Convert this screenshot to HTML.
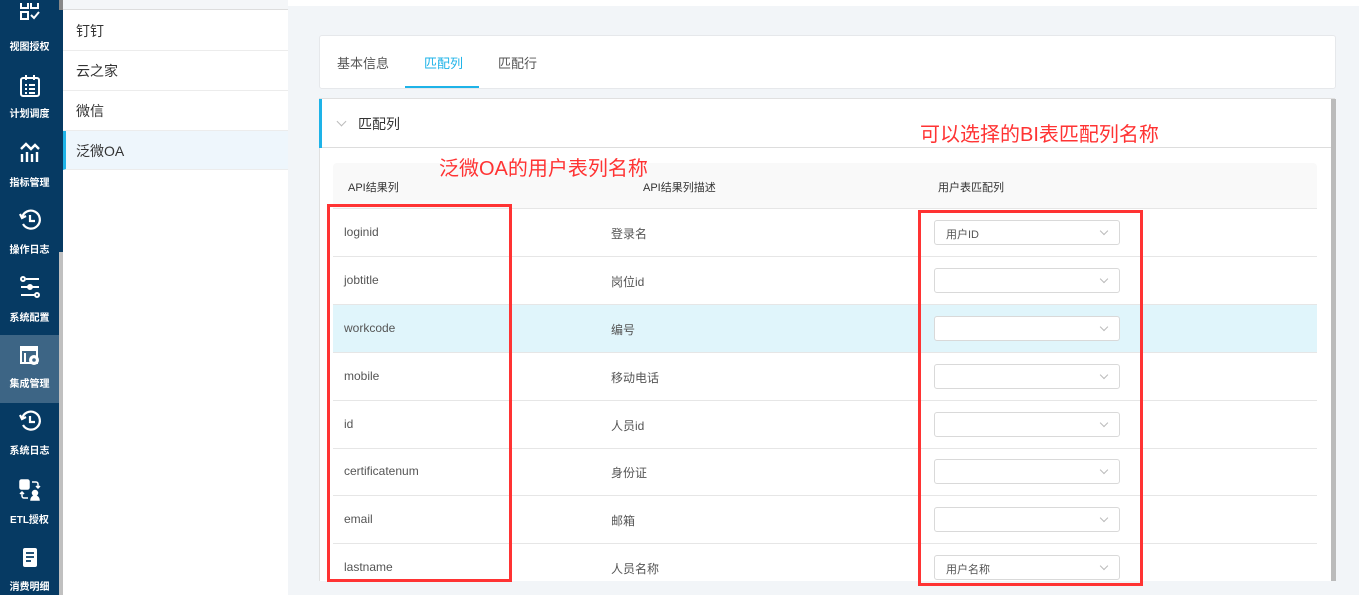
<!DOCTYPE html>
<html><head><meta charset="utf-8"><style>
*{margin:0;padding:0;box-sizing:border-box}
html,body{width:1359px;height:595px;overflow:hidden}
body{position:relative;background:#f2f5f8;font-family:"Liberation Sans","Noto Sans CJK SC",sans-serif;color:#444}
.a{position:absolute}
#sb{left:0;top:0;width:59px;height:595px;background:#063a63}
#sbs{left:59px;top:0;width:4px;height:595px;background:#c0c0c0}
.it{position:absolute;left:0;width:59px;height:68px;color:#fff;font-size:10px;text-align:center}
.it svg{position:absolute;left:18px;width:24px;height:24px}
.it span{position:absolute;left:0;width:59px;font-weight:bold}
#p2{left:63px;top:0;width:225px;height:595px;background:#fff}
.r2{position:absolute;left:0;width:225px;height:40px;border-bottom:1px solid #ececec;font-size:14px;color:#333;padding-left:13px;line-height:40px}
.tab{position:absolute;top:53px;font-size:13px;color:#555}
.row{position:absolute;left:333px;width:984px;height:48px;border-bottom:1px solid #e6e6e6;font-size:12px;color:#555}
.row .c1{position:absolute;left:11px;top:16px}
.row .c2{position:absolute;left:278px;top:16px}
.sel{position:absolute;left:601px;top:11px;width:186px;height:25px;border:1px solid #d9d9d9;border-radius:3px;background:#fff;font-size:11px;color:#555;padding:5px 0 0 11px}
.sel:after{content:"";position:absolute;right:12px;top:7px;width:5px;height:5px;border-right:1px solid #bbb;border-bottom:1px solid #bbb;transform:rotate(45deg)}
.red{position:absolute;border:3px solid #f33}
.rt{position:absolute;color:#f33;font-size:20px}
</style></head><body>
<div class="a" style="left:288px;top:0;width:1071px;height:6px;background:#fff"></div>
<div id="sb" class="a">
 <div class="it" style="top:0;height:66px"><svg style="top:3px" viewBox="0 0 24 24" fill="none" stroke="#fff" stroke-width="2"><rect x="3" y="-2" width="7" height="7"/><rect x="13" y="-2" width="7" height="7"/><rect x="3" y="9" width="7" height="7"/><path d="M13 12l3 3 5-6"/></svg><span style="top:38px">视图授权</span></div>
 <div class="it" style="top:68px;background:#063a63"><svg style="top:6px" viewBox="0 0 24 24" fill="none" stroke="#fff" stroke-width="2"><rect x="3" y="4" width="18" height="18" rx="2"/><path d="M8 1v5M16 1v5M7 11h2M11 11h6M7 15h2M11 15h6M7 19h2M11 19h6"/></svg><span style="top:37px">计划调度</span></div>
 <div class="it" style="top:136px"><svg style="top:4px" viewBox="0 0 24 24" fill="none" stroke="#fff" stroke-width="2.4"><path d="M3 9l5-5 5 5 4-4 4 4"/><path d="M4 14v8M9 12v10M14 14v8M19 12v10"/></svg><span style="top:38px">指标管理</span></div>
 <div class="it" style="top:202px"><svg style="top:6px" viewBox="0 0 24 24" fill="none" stroke="#fff" stroke-width="2.2"><path d="M4 10a9 9 0 1 1 1 6"/><path d="M2 6l2 4 4-2"/><path d="M12 7v6h5"/></svg><span style="top:39px">操作日志</span></div>
 <div class="it" style="top:270px"><svg style="top:5px" viewBox="0 0 24 24" fill="none" stroke="#fff" stroke-width="2"><path d="M8 4h13M3 12h18M3 20h14"/><circle cx="5" cy="4" r="2" fill="#063a63"/><circle cx="12" cy="12" r="2" fill="#fff"/><circle cx="19" cy="20" r="2" fill="#063a63"/></svg><span style="top:39px">系统配置</span></div>
 <div class="it" style="top:335px;background:#3d6585"><svg style="top:9px" viewBox="0 0 24 24" fill="#fff"><rect x="3" y="3" width="16" height="16" fill="none" stroke="#fff" stroke-width="2"/><rect x="3" y="3" width="16" height="4"/><rect x="6" y="9" width="2" height="9"/><circle cx="16" cy="16" r="5"/><circle cx="16" cy="16" r="1.8" fill="#3d6585"/></svg><span style="top:40px">集成管理</span></div>
 <div class="it" style="top:403px"><svg style="top:6px" viewBox="0 0 24 24" fill="none" stroke="#fff" stroke-width="2.2"><path d="M4 10a9 9 0 1 1 1 6"/><path d="M2 6l2 4 4-2"/><path d="M12 7v6h5"/></svg><span style="top:39px">系统日志</span></div>
 <div class="it" style="top:471px"><svg style="top:7px" viewBox="0 0 24 24" fill="#fff" stroke="#fff" stroke-width="1.5"><rect x="2" y="2" width="9" height="9" rx="1.5"/><path d="M14 4h4a2 2 0 0 1 2 2v3M18 8l2 2 2-2" fill="none"/><path d="M10 20H6a2 2 0 0 1-2-2v-3M2 16l2-2 2 2" fill="none"/><circle cx="17" cy="15" r="2.5"/><path d="M13 22a4 4 0 0 1 8 0z"/></svg><span style="top:40px">ETL授权</span></div>
 <div class="it" style="top:539px"><svg style="top:7px" viewBox="0 0 24 24"><rect x="5" y="2" width="14" height="19" rx="2" fill="#fff"/><path d="M8 7h8M8 11h8M8 15h5" stroke="#063a63" stroke-width="1.8"/></svg><span style="top:39px">消费明细</span></div>
</div>
<div id="sbs" class="a"><div class="a" style="left:0;top:0;width:4px;height:10px;background:#888"></div><div class="a" style="left:0;top:10px;width:4px;height:242px;background:#063a63"></div></div>
<div id="p2" class="a">
 <div class="a" style="left:0;top:0;width:225px;height:10px;background:#f4f6f8;border-bottom:1px solid #ddd"></div>
 <div class="r2" style="top:11px">钉钉</div>
 <div class="r2" style="top:51px">云之家</div>
 <div class="r2" style="top:91px">微信</div>
 <div class="r2" style="top:131px;background:#eef6fc;border-left:3px solid #1eb3e8;padding-left:10px;height:39px">泛微OA</div>
</div>
<div class="a" style="left:319px;top:35px;width:1017px;height:54px;background:#fff;border:1px solid #e6e8eb;border-radius:3px"></div>
<div class="tab" style="left:337px">基本信息</div>
<div class="tab" style="left:424px;color:#1eb3e8">匹配列</div>
<div class="tab" style="left:498px">匹配行</div>
<div class="a" style="left:405px;top:86px;width:74px;height:2px;background:#1eb3e8"></div>
<div class="a" style="left:319px;top:98px;width:1016px;height:483px;background:#fff;border:1px solid #e0e0e0;border-bottom:none"></div>
<div class="a" style="left:319px;top:99px;width:3px;height:49px;background:#1eb3e8"></div>
<div class="a" style="left:322px;top:147px;width:1009px;height:1px;background:#ddd"></div>
<div class="a" style="left:1331px;top:99px;width:5px;height:482px;background:#bbb"></div>
<div class="a" style="left:338px;top:118px;width:7px;height:7px;border-right:1px solid #bbb;border-bottom:1px solid #bbb;transform:rotate(45deg)"></div>
<div class="a" style="left:358px;top:114px;font-size:14px;color:#333">匹配列</div>
<div class="a" style="left:333px;top:163px;width:984px;height:46px;background:#f9f9f9;border-radius:4px 4px 0 0;border-bottom:1px solid #e6e6e6;font-size:11px;color:#333">
 <span class="a" style="left:15px;top:16px">API结果列</span><span class="a" style="left:310px;top:16px">API结果列描述</span><span class="a" style="left:605px;top:16px">用户表匹配列</span></div>
<div class="row" style="top:209px"><span class="c1">loginid</span><span class="c2">登录名</span><div class="sel">用户ID</div></div>
<div class="row" style="top:257px"><span class="c1">jobtitle</span><span class="c2">岗位id</span><div class="sel"></div></div>
<div class="row" style="top:305px;background:#e0f5fb"><span class="c1">workcode</span><span class="c2">编号</span><div class="sel"></div></div>
<div class="row" style="top:353px"><span class="c1">mobile</span><span class="c2">移动电话</span><div class="sel"></div></div>
<div class="row" style="top:401px"><span class="c1">id</span><span class="c2">人员id</span><div class="sel"></div></div>
<div class="row" style="top:448px"><span class="c1">certificatenum</span><span class="c2">身份证</span><div class="sel"></div></div>
<div class="row" style="top:496px"><span class="c1">email</span><span class="c2">邮箱</span><div class="sel"></div></div>
<div class="row" style="top:544px;border-bottom:none;height:37px"><span class="c1">lastname</span><span class="c2">人员名称</span><div class="sel">用户名称</div></div>
<div class="red" style="left:327px;top:204px;width:185px;height:378px"></div>
<div class="red" style="left:918px;top:210px;width:225px;height:376px"></div>
<div class="rt" style="left:439px;top:152px">泛微OA的用户表列名称</div>
<div class="rt" style="left:920px;top:118px">可以选择的BI表匹配列名称</div>
</body></html>
